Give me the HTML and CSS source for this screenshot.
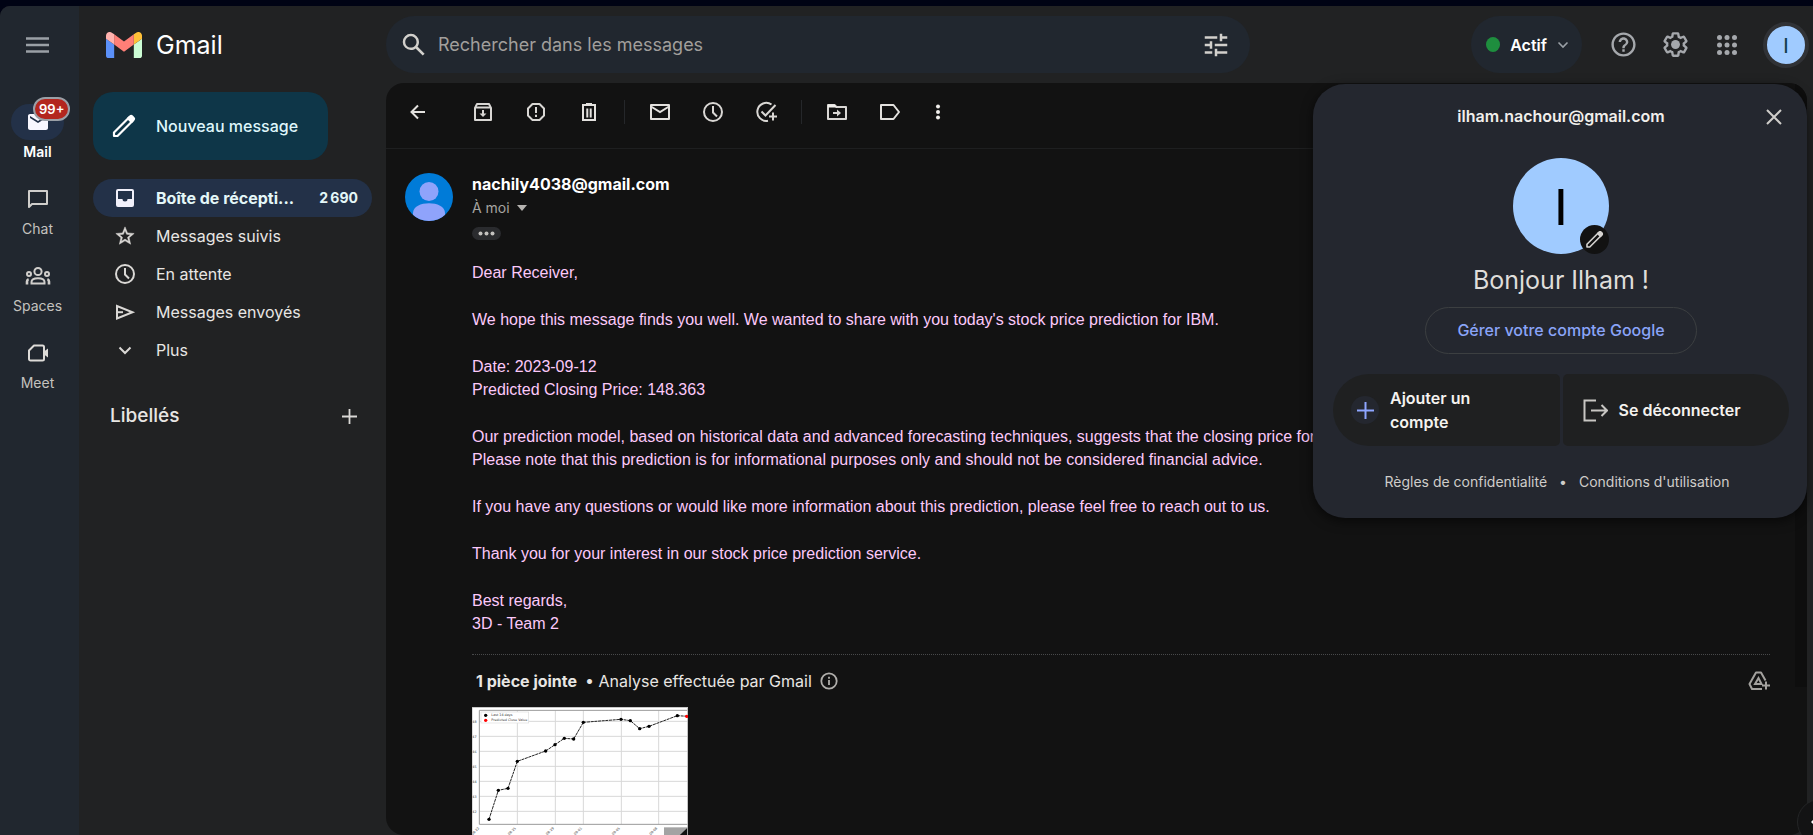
FILE: index.html
```html
<!DOCTYPE html>
<html lang="fr">
<head>
<meta charset="utf-8">
<title>Gmail</title>
<link rel="stylesheet" href="styles.css">
</head>
<body>
<div class="app">
  <nav class="rail" aria-label="Applications">
    <button class="rail-menu" aria-label="Menu principal">
      <svg width="23" height="16" viewBox="0 0 23 16"><path d="M0 1.5h23M0 8h23M0 14.5h23" stroke="#9aa0a6" stroke-width="2.4"/></svg>
    </button>
    <a class="rail-item rail-active" href="#mail">
      <span class="rail-icon">
        <svg width="24" height="24" viewBox="0 0 24 24"><path fill="#f8f7ff" d="M20 4H4c-1.1 0-2 .9-2 2v12c0 1.100.9 2 2 2h16c1.100 0 2-.9 2-2V6c0-1.100-.9-2-2-2zm0 4l-8 5-8-5V6l8 5 8-5v2z"/></svg>
        <span class="badge">99+</span>
      </span>
      <span class="rail-label">Mail</span>
    </a>
    <a class="rail-item" href="#chat">
      <span class="rail-icon">
        <svg width="24" height="24" viewBox="0 0 24 24"><path fill="none" stroke="#d0cecb" stroke-width="2" stroke-linejoin="round" d="M3 4h18v13H6l-3 3z"/></svg>
      </span>
      <span class="rail-label">Chat</span>
    </a>
    <a class="rail-item" href="#spaces">
      <span class="rail-icon">
        <svg width="26" height="24" viewBox="0 0 26 24" fill="none" stroke="#d0cecb" stroke-width="2"><circle cx="13" cy="7.500" r="3.600"/><circle cx="4" cy="10" r="2"/><circle cx="22" cy="10" r="2"/><path d="M6.500 19.500v-1.500c0-5 13-5 13 0v1.500z"/><path d="M2 20.500v-3c0-1.200.6-2 1.600-2.400M24 20.500v-3c0-1.200-.6-2-1.600-2.400" stroke-width="2.600"/></svg>
      </span>
      <span class="rail-label">Spaces</span>
    </a>
    <a class="rail-item" href="#meet">
      <span class="rail-icon">
        <svg width="24" height="24" viewBox="0 0 24 24"><path fill="none" stroke="#dddbd8" stroke-width="2" stroke-linejoin="round" d="M8 4.500h8.500c.8 0 1.500.6 1.500 1.500v12c0 .8-.6 1.500-1.500 1.500h-12c-.8 0-1.500-.6-1.500-1.500V9.500z"/><path fill="#dddbd8" d="M18 10.500l4-3v9l-4-3z"/></svg>
      </span>
      <span class="rail-label">Meet</span>
    </a>
  </nav>

  <header class="header">
    <a class="brand" href="#accueil">
      <svg width="36" height="26" viewBox="52 42 88 66" preserveAspectRatio="none"><path fill="#5b90f8" d="M58 108h14V74L52 59v43c0 3.320 2.690 6 6 6"/><path fill="#ccfcd4" d="M120 108h14c3.320 0 6-2.690 6-6V59l-20 15"/><path fill="#ffc038" d="M120 48v26l20-15v-8c0-7.420-8.470-11.650-14.400-7.200"/><path fill="#ff7f77" d="M72 74V48l24 18 24-18v26L96 92"/><path fill="#ffb2ae" d="M52 51v8l20 15V48l-5.600-4.200c-5.940-4.450-14.400-.22-14.400 7.200"/></svg>
      <span>Gmail</span>
    </a>
    <form class="search" role="search">
      <button class="bare" type="button" aria-label="Rechercher">
        <svg width="30" height="30" viewBox="0 0 24 24"><path fill="#d2d0cc" d="M20.490 19l-5.730-5.730C15.530 12.200 16 10.910 16 9.500A6.500 6.500 0 1 0 9.500 16c1.410 0 2.700-.47 3.770-1.240L19 20.490 20.490 19zM5 9.500C5 7.010 7.010 5 9.500 5S14 7.010 14 9.500 11.990 14 9.500 14 5 11.990 5 9.500z"/></svg>
      </button>
      <input class="search-input" type="text" aria-label="Rechercher dans les messages" placeholder="Rechercher dans les messages">
      <button class="bare" type="button" aria-label="Options de recherche">
        <svg width="30" height="30" viewBox="0 0 24 24"><path fill="#d2d0cc" d="M3 17v2h6v-2H3zM3 5v2h10V5H3zm10 16v-2h8v-2h-8v-2h-2v6h2zM7 9v2H3v2h4v2h2V9H7zm14 4v-2H11v2h10zm-6-4h2V7h4V5h-4V3h-2v6z"/></svg>
      </button>
    </form>
    <div class="tools">
      <button class="status"><span class="status-dot"></span>Actif
        <svg width="12" height="8" viewBox="0 0 12 8"><path d="M1.500 1.500L6 6l4.500-4.500" fill="none" stroke="#9aa0a6" stroke-width="1.600"/></svg>
      </button>
      <button class="tool" aria-label="Assistance">
        <svg width="29" height="29" viewBox="0 0 24 24"><path fill="#a5a8ac" d="M11 18h2v-2h-2v2zm1-16C6.480 2 2 6.480 2 12s4.480 10 10 10 10-4.480 10-10S17.520 2 12 2zm0 18c-4.410 0-8-3.590-8-8s3.590-8 8-8 8 3.590 8 8-3.590 8-8 8zm0-14c-2.210 0-4 1.790-4 4h2c0-1.100.9-2 2-2s2 .9 2 2c0 2-3 1.750-3 5h2c0-2.250 3-2.500 3-5 0-2.210-1.790-4-4-4z"/></svg>
      </button>
      <button class="tool" aria-label="Paramètres">
        <svg width="29" height="29" viewBox="0 0 24 24" fill="#a5a8ac"><path d="M13.850 22.250h-3.700c-.74 0-1.360-.54-1.450-1.270l-.27-1.890c-.27-.14-.53-.29-.79-.46l-1.800.72c-.7.26-1.470-.03-1.810-.65L2.200 15.530c-.35-.66-.2-1.440.36-1.880l1.530-1.190c-.01-.15-.02-.3-.02-.46 0-.15.01-.31.02-.46l-1.520-1.190c-.59-.45-.74-1.260-.37-1.880l1.850-3.190c.34-.62 1.110-.9 1.790-.63l1.810.73c.26-.17.52-.32.78-.46l.27-1.910c.09-.7.71-1.250 1.440-1.250h3.700c.74 0 1.360.54 1.450 1.270l.27 1.890c.27.14.53.29.79.46l1.800-.72c.71-.26 1.480.03 1.820.65l1.840 3.180c.36.66.2 1.440-.36 1.880l-1.520 1.190c.01.15.02.3.02.46s-.01.31-.02.46l1.520 1.190c.56.45.72 1.230.37 1.860l-1.860 3.220c-.34.62-1.110.9-1.800.63l-1.800-.72c-.26.17-.52.32-.78.46l-.27 1.910c-.1.68-.72 1.220-1.460 1.220zm-3.230-2h2.760l.37-2.550.53-.22c.44-.18.88-.44 1.340-.78l.45-.34 2.380.96 1.380-2.400-2.030-1.580.07-.56c.03-.26.06-.51.06-.78s-.03-.53-.06-.78l-.07-.56 2.030-1.580-1.390-2.400-2.390.96-.45-.35c-.42-.32-.87-.58-1.330-.77l-.52-.22-.37-2.550h-2.760l-.37 2.550-.53.21c-.44.19-.88.44-1.340.79l-.45.33-2.380-.95-1.390 2.390 2.030 1.580-.07.56a7 7 0 0 0-.06.79c0 .26.02.53.06.78l.07.56-2.030 1.580 1.380 2.400 2.390-.96.45.35c.43.33.86.58 1.330.77l.53.22.38 2.550z"/><circle cx="12" cy="12" r="3.700"/></svg>
      </button>
      <button class="tool" aria-label="Applications Google">
        <svg width="20" height="20" viewBox="0 0 20 20" fill="#a5a8ac"><circle cx="2.500" cy="2.500" r="2.500"/><circle cx="10" cy="2.500" r="2.500"/><circle cx="17.500" cy="2.500" r="2.500"/><circle cx="2.500" cy="10" r="2.500"/><circle cx="10" cy="10" r="2.500"/><circle cx="17.500" cy="10" r="2.500"/><circle cx="2.500" cy="17.500" r="2.500"/><circle cx="10" cy="17.500" r="2.500"/><circle cx="17.500" cy="17.500" r="2.500"/></svg>
      </button>
      <button class="me" aria-label="Compte Google">I</button>
    </div>
  </header>

  <aside class="side">
    <button class="compose">
      <svg width="24" height="24" viewBox="0 0 24 24"><path fill="none" stroke="#fff" stroke-width="2.200" stroke-linejoin="round" d="M2 18.500L17 3.500l3.500 3.500L5.500 22H2z"/><path fill="#fff" stroke="#fff" stroke-width="2" stroke-linejoin="round" d="M16 4.500l2.200-2.200c.6-.6 1.300-.6 1.900 0l1.600 1.600c.6.6.6 1.300 0 1.900L19.500 8z"/></svg>
      Nouveau message
    </button>
    <nav class="folders" aria-label="Dossiers">
      <a class="folder folder-active" href="#inbox">
        <svg width="24" height="24" viewBox="0 0 24 24"><path fill="#f1f0fa" fill-rule="evenodd" d="M5 3h14a2 2 0 0 1 2 2v14a2 2 0 0 1-2 2H5a2 2 0 0 1-2-2V5a2 2 0 0 1 2-2zm0 2v8h4.500a2.500 2.500 0 0 0 5 0H19V5z"/></svg>
        <span class="folder-name">Boîte de récepti...</span><span class="count">2&#8239;690</span>
      </a>
      <a class="folder" href="#suivis">
        <svg width="22" height="22" viewBox="0 0 24 24"><path fill="#dad8d5" stroke="#dad8d5" stroke-width=".5" d="M22 9.240l-7.190-.62L12 2 9.190 8.630 2 9.240l5.460 4.730L5.820 21 12 17.270 18.180 21l-1.630-7.030L22 9.240zM12 15.400l-3.760 2.270 1-4.280-3.320-2.880 4.380-.38L12 6.100l1.710 4.040 4.380.38-3.320 2.880 1 4.280L12 15.400z"/></svg>
        <span class="folder-name">Messages suivis</span>
      </a>
      <a class="folder" href="#attente">
        <svg width="24" height="24" viewBox="0 0 24 24" fill="none" stroke="#dad8d5" stroke-width="2"><circle cx="12" cy="12" r="9"/><path d="M12 6v6.500l4 4"/></svg>
        <span class="folder-name">En attente</span>
      </a>
      <a class="folder" href="#envoyes">
        <svg width="24" height="24" viewBox="0 0 24 24" fill="none" stroke="#dad8d5" stroke-width="2"><path d="M4 6v12.500L19.500 12.200z"/><path d="M4 12.200h6"/></svg>
        <span class="folder-name">Messages envoyés</span>
      </a>
      <a class="folder" href="#plus">
        <svg width="24" height="24" viewBox="0 0 24 24"><path d="M6.500 9.500L12 15l5.500-5.500" fill="none" stroke="#dad8d5" stroke-width="2"/></svg>
        <span class="folder-name">Plus</span>
      </a>
    </nav>
    <div class="labels">
      <h2>Libellés</h2>
      <button class="bare" aria-label="Créer un libellé"><svg width="15" height="15" viewBox="0 0 15 15"><path d="M7.500 0v15M0 7.500h15" stroke="#dad8d5" stroke-width="1.800"/></svg></button>
    </div>
  </aside>

  <main class="panel">
    <div class="toolbar">
      <button class="act back" aria-label="Retour"><svg width="24" height="24" viewBox="0 0 24 24"><path d="M19 12H6M12 5.500L5.500 12l6.500 6.500" fill="none" stroke="#e3e1de" stroke-width="2"/></svg></button>
      <button class="act" aria-label="Archiver"><svg width="24" height="24" viewBox="0 0 24 24" fill="none" stroke="#d9d7d4" stroke-width="2"><path d="M4 8v12h16V8l-2-4H6z" stroke-linejoin="round"/><path d="M4.500 7.500h15"/><path d="M12 10v5"/><path d="M8.500 13.500L12 17l3.500-3.500z" fill="#d9d7d4" stroke="none"/></svg></button>
      <button class="act" aria-label="Signaler comme spam"><svg width="24" height="24" viewBox="0 0 24 24" fill="none" stroke="#d9d7d4" stroke-width="2"><path d="M8.500 4h7L20 8.500v7L15.500 20h-7L4 15.500v-7z" stroke-linejoin="round"/><path d="M12 7v6M12 14.800v2.200"/></svg></button>
      <button class="act" aria-label="Supprimer"><svg width="24" height="24" viewBox="0 0 24 24" fill="none" stroke="#e3e1de" stroke-width="2"><path d="M6 6v14h12V6M5 5h14M9 4h6M10.300 8.500v9M13.700 8.500v9"/></svg></button>
      <span class="sep"></span>
      <button class="act" aria-label="Marquer comme non lu"><svg width="24" height="24" viewBox="0 0 24 24" fill="none" stroke="#e3e1de" stroke-width="2"><path d="M3 5h18v14H3z" stroke-linejoin="round"/><path d="M3 6.500l9 5.500 9-5.500"/></svg></button>
      <button class="act" aria-label="Mettre en attente"><svg width="24" height="24" viewBox="0 0 24 24" fill="none" stroke="#d9d7d4" stroke-width="2"><circle cx="12" cy="12" r="9"/><path d="M12 6v6.500l4 4"/></svg></button>
      <button class="act" aria-label="Ajouter à Tasks"><svg width="24" height="24" viewBox="0 0 24 24" fill="none" stroke="#d9d7d4" stroke-width="2"><path d="M17.500 4.500A9 9 0 1 0 14 20.700"/><path d="M7.500 11.500l4 4L21.500 5M19 12.500v8M15 16.500h8"/></svg></button>
      <span class="sep"></span>
      <button class="act" aria-label="Déplacer vers"><svg width="24" height="24" viewBox="0 0 24 24" fill="none" stroke="#d9d7d4" stroke-width="2"><path d="M3 5v14h18V7H11.500l-2-2z" stroke-linejoin="round"/><path fill="#f1efec" stroke="none" d="M3 4.500h6.500l2.500 3H3z"/><path d="M8 13h5"/><path d="M12 9.500l4 3.500-4 3.500z" fill="#d9d7d4" stroke="none"/></svg></button>
      <button class="act" aria-label="Libellés"><svg width="24" height="24" viewBox="0 0 24 24" fill="none" stroke="#e3e1de" stroke-width="2"><path d="M3 5h12.500L21 12l-5.500 7H3z" stroke-linejoin="round"/></svg></button>
      <button class="act act-more" aria-label="Plus"><svg width="24" height="24" viewBox="0 0 24 24" fill="#f1efec"><circle cx="12" cy="6.500" r="2"/><circle cx="12" cy="12" r="2"/><circle cx="12" cy="17.500" r="2"/></svg></button>
    </div>

    <article class="message">
      <svg class="sender-pic" width="48" height="48" viewBox="0 0 48 48"><clipPath id="pic"><circle cx="24" cy="24" r="24"/></clipPath><g clip-path="url(#pic)"><rect width="48" height="48" fill="#007bd8"/><circle cx="24" cy="18.500" r="9.500" fill="#8fa3fb"/><path d="M8 48v-8c0-13 32-13 32 0v8z" fill="#8fa3fb"/></g></svg>
      <div class="content">
        <h1 class="sender">nachily4038@gmail.com</h1>
        <button class="to">À moi <svg width="10" height="6" viewBox="0 0 10 6"><path d="M0 0h10L5 6z" fill="#b5b3b0"/></svg></button>
        <button class="trimmed" aria-label="Afficher le contenu abrégé"><svg width="17" height="5" viewBox="0 0 17 5" fill="#c4c2bf"><circle cx="2.500" cy="2.500" r="2"/><circle cx="8.500" cy="2.500" r="2"/><circle cx="14.500" cy="2.500" r="2"/></svg></button>
        <div class="body">
          <p>Dear Receiver,</p>
          <p>We hope this message finds you well. We wanted to share with you today's stock price prediction for IBM.</p>
          <p>Date: 2023-09-12<br>Predicted Closing Price: 148.363</p>
          <p>Our prediction model, based on historical data and advanced forecasting techniques, suggests that the closing price for IBM<br>Please note that this prediction is for informational purposes only and should not be considered financial advice.</p>
          <p>If you have any questions or would like more information about this prediction, please feel free to reach out to us.</p>
          <p>Thank you for your interest in our stock price prediction service.</p>
          <p>Best regards,<br>3D - Team 2</p>
        </div>
        <section class="attachments">
          <div class="att-head">
            <h2>1 pièce jointe</h2>
            <span>• Analyse effectuée par Gmail</span>
            <svg width="18" height="18" viewBox="0 0 18 18" fill="none" stroke="#b0aeab" stroke-width="1.800"><circle cx="9" cy="9" r="7.700"/><path d="M9 8v5M9 4.800v2"/></svg>
            <button class="bare drive" aria-label="Ajouter à Drive"><svg width="22" height="20" viewBox="0 0 22 20" fill="none" stroke="#a3a19e" stroke-width="2"><path d="M17.500 9.500L13 1.500H8L1.500 13l2.500 5h10" stroke-linejoin="round"/><path d="M10.500 7L7 13h6.500z"/><path d="M18 10.500v8M14 14.500h8"/></svg></button>
          </div>
          <a class="thumb" href="#graphique" aria-label="Graphique des prix">
            <svg width="216" height="144" viewBox="36 201 648 432">
              <rect x="36" y="201" width="648" height="432" fill="#fff"/>
              <g stroke="#d8d8d8" stroke-width="3"><path d="M58 244h626M58 289h626M58 334h626M58 379h626M58 424h626M58 469h626M58 514h626M172 211v342M286 211v342M370 211v342M484 211v342M596 211v342"/></g>
              <path d="M58 553V211h626M58 553h626" fill="none" stroke="#999" stroke-width="3"/>
              <rect x="63" y="216" width="143" height="33" fill="#fff" stroke="#ddd" stroke-width="2"/>
              <g font-family="DejaVu Sans, sans-serif" font-size="10" fill="#333"><text x="94" y="229">Last 14 days</text><text x="94" y="244">Predicted Close Value</text>
              <g><text x="37" y="248">48</text><text x="37" y="293">47</text><text x="37" y="338">46</text><text x="37" y="383">45</text><text x="37" y="428">44</text><text x="37" y="473">43</text><text x="37" y="518">42</text></g>
              <g><text transform="translate(38 586) rotate(-45)">08-22</text><text transform="translate(148 586) rotate(-45)">08-25</text><text transform="translate(262 586) rotate(-45)">08-29</text><text transform="translate(346 586) rotate(-45)">09-01</text><text transform="translate(460 586) rotate(-45)">09-05</text><text transform="translate(572 586) rotate(-45)">09-08</text></g></g>
              <path d="M87 538L115 451L144 445L172 364L257 333L285 314L313 295L341 297L370 247L483 238L511 242L539 266L567 259L652 227L684 229" fill="none" stroke="#222" stroke-width="3" stroke-dasharray="9 2"/>
              <g fill="#000"><circle cx="87" cy="538" r="5"/><circle cx="115" cy="451" r="5"/><circle cx="144" cy="445" r="5"/><circle cx="172" cy="364" r="5"/><circle cx="257" cy="333" r="5"/><circle cx="285" cy="314" r="5"/><circle cx="313" cy="295" r="5"/><circle cx="341" cy="297" r="5"/><circle cx="370" cy="247" r="5"/><circle cx="483" cy="238" r="5"/><circle cx="511" cy="242" r="5"/><circle cx="539" cy="266" r="5"/><circle cx="567" cy="259" r="5"/><circle cx="652" cy="227" r="5"/><circle cx="77" cy="226" r="5"/></g>
              <circle cx="77" cy="241" r="5" fill="#f00"/>
              <path d="M612 562h72v71h-72z" fill="#a3a3a3"/><path d="M684 562v71h-72v-3z" fill="#111"/>
              <path d="M36 633V202h647v431" fill="none" stroke="#bbb" stroke-width="3"/>
              <circle cx="680" cy="229" r="5" fill="#f00"/>
            </svg>
          </a>
        </section>
      </div>
    </article>
    <div class="scroll-thumb"></div>
  </main>
</div>

<section class="account" aria-label="Compte Google">
  <div class="account-head">
    ilham.nachour@gmail.com
    <button class="bare close" aria-label="Fermer"><svg width="16" height="16" viewBox="0 0 16 16"><path d="M1 1l14 14M15 1L1 15" stroke="#cfcdca" stroke-width="2"/></svg></button>
  </div>
  <div class="portrait">I
    <button class="edit" aria-label="Modifier la photo"><svg width="19" height="19" viewBox="0 0 24 24"><path fill="none" stroke="#d6d4d1" stroke-width="2" stroke-linejoin="round" d="M2.500 18L17 3.500l3.500 3.500L6 21.500H2.500z"/><path fill="#d6d4d1" stroke="#d6d4d1" stroke-width="2" stroke-linejoin="round" d="M16 4.500l2.200-2.200h1.600l2 2v1.600L19.500 8z"/></svg></button>
  </div>
  <h2 class="hello">Bonjour Ilham !</h2>
  <a class="manage" href="#compte">Gérer votre compte Google</a>
  <div class="choices">
    <button class="choice choice-add"><span class="plus"><svg width="17" height="17" viewBox="0 0 17 17"><path d="M8.500 0v17M0 8.500h17" stroke="#8ea6ff" stroke-width="2"/></svg></span><span>Ajouter un compte</span></button>
    <button class="choice choice-out"><svg width="25" height="23" viewBox="0 0 25 23" fill="none" stroke="#c8c6c3" stroke-width="2"><path d="M13 1.500H1.500v20H13M8 11.500h16M18.500 6l5.500 5.500-5.500 5.500"/></svg><span>Se déconnecter</span></button>
  </div>
  <div class="legal"><a href="#regles">Règles de confidentialité</a><span>•</span><a href="#conditions">Conditions d'utilisation</a></div>
</section>
<button class="bubble" aria-label="Extension"><svg width="14" height="14" viewBox="0 0 14 14"><path d="M0 7l4-4 2 2 2-5h6v14H6L4 11z" fill="#fff"/></svg></button>
</body>
</html>
```
FILE: styles.css
```css
* {
  box-sizing: border-box;
}

body {
  position: relative;
  height: 100vh;
  margin: 0;
  padding-top: 6px;
  overflow: hidden;
  background: #000314;
  color: #e8e6e3;
  font: 16px/24px Inter, "Liberation Sans", sans-serif;
}

button {
  padding: 0;
  border: 0;
  background: none;
  color: inherit;
  font: inherit;
}

a {
  color: inherit;
  text-decoration: none;
}

svg {
  display: block;
  flex: none;
}

h1, h2, p {
  margin: 0;
}

.app {
  display: grid;
  grid-template-columns: 79px 307px minmax(0, 1fr);
  grid-template-rows: 77px minmax(0, 1fr);
  height: 100%;
  overflow: hidden;
  border-top-left-radius: 10px;
  background: #212223;
}

/* App rail */
.rail {
  grid-row: 1 / 3;
  display: flex;
  flex-direction: column;
  align-items: center;
  gap: 17px;
  padding-right: 4px;
  background: #21272f;
}

.rail-menu {
  display: grid;
  place-items: center;
  width: 48px;
  height: 77px;
  margin-bottom: 4px;
}

.rail-item {
  display: flex;
  flex-direction: column;
  align-items: center;
  color: #c4c2bf;
  font-size: 14px;
}

.rail-icon {
  position: relative;
  display: grid;
  place-items: center;
  width: 53px;
  height: 36px;
  border-radius: 18px;
}

.rail-active {
  color: #fff;
  font-weight: 600;
}

.rail-active .rail-icon {
  background: #233148;
}

.badge {
  position: absolute;
  top: -7px;
  left: 22px;
  padding: 0 4px;
  border: 2px solid #9a9fa6;
  border-radius: 12px;
  background: #b3261e;
  color: #fff;
  font-size: 13px;
  line-height: 20px;
}

/* Header */
.header {
  grid-column: 2 / 4;
  display: flex;
  align-items: center;
  padding-right: 4px;
}

.brand {
  display: flex;
  flex: none;
  align-items: center;
  gap: 14px;
  width: 307px;
  padding-left: 27px;
  color: #fff;
  font-size: 25px;
}

.search {
  display: flex;
  flex: 0 1 864px;
  align-items: center;
  height: 57px;
  padding: 0 19px 0 13px;
  border-radius: 29px;
  background: #21272f;
}

.search-input {
  flex: 1;
  min-width: 0;
  padding: 0 9px;
  border: 0;
  background: none;
  color: #e8e6e3;
  font: 18px/24px Inter, "Liberation Sans", sans-serif;
}

.search-input::placeholder {
  color: #a19f9c;
}

.tools {
  display: flex;
  flex: none;
  align-items: center;
  margin-left: auto;
}

.status {
  display: flex;
  align-items: center;
  gap: 10px;
  height: 57px;
  margin-right: 15px;
  padding: 0 13px 0 15px;
  border-radius: 29px;
  background: #21272f;
  color: #fff;
  font-weight: 600;
}

.status-dot {
  width: 14px;
  height: 15px;
  border-radius: 50%;
  background: #1e8e3e;
}

.tool {
  display: grid;
  place-items: center;
  width: 52px;
  height: 52px;
}

.me {
  width: 46px;
  height: 46px;
  margin-left: 10px;
  border: 4px solid #303236;
  border-radius: 50%;
  background: #a0cbff;
  color: #123c4c;
  font-family: Lato, sans-serif;
  font-size: 21px;
}

/* Sidebar */
.side {
  padding: 9px 14px;
}

.compose {
  display: flex;
  align-items: center;
  gap: 20px;
  height: 68px;
  padding: 0 30px 0 19px;
  border-radius: 20px;
  background: #0e3648;
  color: #dff6fb;
  font-weight: 500;
}

.folders {
  margin-top: 19px;
}

.folder {
  display: flex;
  align-items: center;
  height: 38px;
  padding: 0 14px 0 20px;
  border-radius: 19px;
}

.folder svg {
  width: 24px;
}

.folder-name {
  flex: 1;
  margin-left: 19px;
  white-space: nowrap;
}

.folder-active {
  background: #233148;
  color: #e4f7f8;
  font-weight: 700;
}

.count {
  font-size: 14px;
}

.labels {
  display: flex;
  align-items: center;
  justify-content: space-between;
  height: 40px;
  margin-top: 27px;
  padding: 0 15px 0 17px;
}

.labels h2 {
  font-size: 19px;
  font-weight: 500;
}

/* Mail panel */
.panel {
  position: relative;
  margin-right: 6px;
  overflow: hidden;
  border-radius: 18px;
  background: #121212;
}

.toolbar {
  display: flex;
  align-items: center;
  padding: 0 5px 7px;
  border-bottom: 1px solid #1e1f20;
}

.act {
  display: grid;
  place-items: center;
  width: 53px;
  height: 58px;
}

.back {
  margin-right: 12px;
}

.act-more {
  width: 44px;
}

.sep {
  width: 1px;
  height: 24px;
  margin: 0 8px 0 9px;
  background: #25272a;
}

.message {
  display: flex;
  gap: 19px;
  padding: 24px 37px 0 19px;
}

.sender-pic {
  flex: none;
}

.content {
  flex: 1;
  min-width: 0;
}

.sender {
  color: #fff;
  font-size: 16px;
  font-weight: 700;
  line-height: 23px;
}

.to {
  display: flex;
  align-items: center;
  gap: 7px;
  color: #a6a4a1;
  font-size: 14px;
}

.trimmed {
  display: grid;
  place-items: center;
  width: 29px;
  height: 13px;
  margin-top: 7px;
  border-radius: 7px;
  background: #2a2b2e;
}

.body {
  display: grid;
  gap: 24px;
  margin: 21px 0 19px;
  color: #fcc9fa;
  font: 16px/23px "Liberation Sans", Arial, sans-serif;
  white-space: nowrap;
}

.attachments {
  border-top: 1px dotted #48494a;
}

.att-head {
  display: flex;
  align-items: center;
  gap: 8px;
  height: 52px;
  padding-left: 4px;
}

.att-head h2 {
  font-size: 16px;
  font-weight: 700;
}

.drive {
  margin-left: auto;
}

.thumb {
  display: block;
  width: 216px;
}

.scroll-thumb {
  position: absolute;
  top: 0;
  right: 0;
  width: 12px;
  height: 604px;
  background: #0e0e0e;
}

/* Account card */
.account {
  position: absolute;
  top: 84px;
  right: 6px;
  display: flex;
  flex-direction: column;
  align-items: center;
  width: 494px;
  padding: 0 18px 26px 20px;
  border-radius: 32px;
  background: #24272f;
  box-shadow: 0 3px 12px rgba(0, 0, 0, 0.6);
}

.account-head {
  position: relative;
  width: 100%;
  color: #f1efec;
  font-weight: 600;
  line-height: 64px;
  text-align: center;
}

.close {
  position: absolute;
  top: 25px;
  right: 7px;
}

.portrait {
  position: relative;
  width: 96px;
  margin-top: 10px;
  border-radius: 50%;
  background: #a0cbff;
  color: #000;
  font-family: Lato, sans-serif;
  font-size: 51px;
  line-height: 96px;
  text-align: center;
}

.edit {
  position: absolute;
  right: 0;
  bottom: 0;
  display: grid;
  place-items: center;
  width: 29px;
  height: 29px;
  border-radius: 50%;
  background: #121212;
}

.hello {
  margin: 8px 0 9px;
  color: #dfddda;
  font-size: 25px;
  font-weight: 400;
  line-height: 36px;
}

.manage {
  padding: 0 31px;
  border: 1px solid #3c3f41;
  border-radius: 24px;
  color: #8aa4f8;
  font-weight: 500;
  line-height: 45px;
}

.choices {
  display: grid;
  grid-template-columns: 1fr 1fr;
  gap: 3px;
  width: 100%;
  margin: 20px 0 26px;
}

.choice {
  display: flex;
  align-items: center;
  gap: 11px;
  height: 72px;
  background: #1f2021;
  color: #f4f2ef;
  font-weight: 600;
  text-align: left;
}

.choice-add {
  padding: 0 60px 0 18px;
  border-radius: 36px 5px 5px 36px;
}

.choice-out {
  padding: 0 20px;
  border-radius: 5px 36px 36px 5px;
}

.plus {
  display: grid;
  flex: none;
  place-items: center;
  width: 28px;
  height: 28px;
  border-radius: 50%;
  background: #24272f;
}

.legal {
  display: flex;
  gap: 12px;
  padding-right: 8px;
  color: #cfcdca;
  font-size: 14px;
  line-height: 20px;
}

.bubble {
  position: absolute;
  right: -30px;
  bottom: -10px;
  width: 46px;
  height: 46px;
  padding-left: 26px;
  border: 1px solid #242526;
  border-radius: 50%;
  background: #131314;
}

.bubble {
  padding-left: 13px;
}
```
